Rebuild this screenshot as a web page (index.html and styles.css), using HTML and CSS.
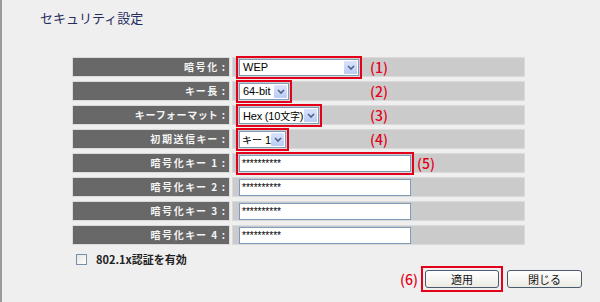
FILE: index.html
```html
<!DOCTYPE html>
<html lang="ja">
<head>
  <meta charset="UTF-8">
  <title>セキュリティ設定</title>
  <link rel="stylesheet" href="styles.css">
</head>
<body>
  <div class="page">
    <h1 class="title">セキュリティ設定</h1>

    <div class="form">
      <div class="label">暗号化<span class="colon">:</span></div>
      <div class="value">
        <span class="slot"><span class="mark"><span class="select w-enc">WEP<span class="arrow"><svg width="8" height="5" viewBox="0 0 8 5"><path d="M1 1l3 3 3-3" fill="none" stroke="#4d6185" stroke-width="1.6"/></svg></span></span></span></span>
        <span class="num">(1)</span>
      </div>

      <div class="label">キー長<span class="colon">:</span></div>
      <div class="value">
        <span class="slot"><span class="mark"><span class="select w-len">64-bit<span class="arrow"><svg width="8" height="5" viewBox="0 0 8 5"><path d="M1 1l3 3 3-3" fill="none" stroke="#4d6185" stroke-width="1.6"/></svg></span></span></span></span>
        <span class="num">(2)</span>
      </div>

      <div class="label">キーフォーマット<span class="colon">:</span></div>
      <div class="value">
        <span class="slot"><span class="mark"><span class="select w-fmt">Hex (10<span class="cjk">文字</span>)<span class="arrow"><svg width="8" height="5" viewBox="0 0 8 5"><path d="M1 1l3 3 3-3" fill="none" stroke="#4d6185" stroke-width="1.6"/></svg></span></span></span></span>
        <span class="num">(3)</span>
      </div>

      <div class="label">初期送信キー<span class="colon">:</span></div>
      <div class="value">
        <span class="slot"><span class="mark"><span class="select w-key"><span class="cjk">キー</span> 1<span class="arrow"><svg width="8" height="5" viewBox="0 0 8 5"><path d="M1 1l3 3 3-3" fill="none" stroke="#4d6185" stroke-width="1.6"/></svg></span></span></span></span>
        <span class="num">(4)</span>
      </div>

      <div class="label">暗号化キー 1<span class="colon">:</span></div>
      <div class="value">
        <span class="mark"><span class="input">**********</span></span>
        <span class="num">(5)</span>
      </div>

      <div class="label">暗号化キー 2<span class="colon">:</span></div>
      <div class="value">
        <span class="plain"><span class="input">**********</span></span>
      </div>

      <div class="label">暗号化キー 3<span class="colon">:</span></div>
      <div class="value">
        <span class="plain"><span class="input">**********</span></span>
      </div>

      <div class="label">暗号化キー 4<span class="colon">:</span></div>
      <div class="value">
        <span class="plain"><span class="input">**********</span></span>
      </div>
    </div>

    <div class="check">
      <span class="checkbox"></span>
      <span>802.1x認証を有効</span>
    </div>

    <div class="buttons">
      <span class="num">(6)</span>
      <span class="mark btn-mark"><span class="btn">適用</span></span>
      <span class="btn close">閉じる</span>
    </div>
  </div>
</body>
</html>
```

FILE: styles.css
```css
body {
  margin: 0;
  background: #efefef;
  font-family: "Noto Sans CJK JP", sans-serif;
}

.page {
  height: 302px;
  box-sizing: border-box;
  border-left: 2px solid #9a9a9a;
}

/* Page heading */
.title {
  margin: 0;
  padding: 10px 0 0 38px;
  font-size: 13px;
  line-height: 16px;
  font-weight: normal;
  color: #262c5e;
}

/* Settings table */
.form {
  display: grid;
  grid-template-columns: 158px 293px;
  grid-auto-rows: 20px;
  column-gap: 2px;
  row-gap: 4px;
  margin: 31px 0 0 70px;
}

.label,
.value {
  box-sizing: border-box;
  border: 1px solid #dadada;
  display: flex;
  align-items: center;
}

.label {
  background: #686868;
  justify-content: flex-end;
  padding-right: 4px;
  color: #f4f4f4;
  font-size: 10px;
  font-weight: bold;
  font-feature-settings: "palt";
  letter-spacing: 1.6px;
  line-height: 12px;
}

.colon {
  margin-left: 3px;
  letter-spacing: 0;
}

.value {
  background: #cbcbcb;
  padding-left: 3px;
}

.slot {
  width: 131px;
  display: flex;
}

/* Red highlight frames */
.mark {
  display: flex;
  border: 2px solid #e2001a;
  padding: 1px;
}

.plain {
  display: flex;
  padding: 3px;
}

.num {
  color: #e2001a;
  font-size: 14px;
  font-weight: 500;
  line-height: 16px;
  margin-left: 3px;
}

/* Fake combo boxes */
.select {
  position: relative;
  box-sizing: border-box;
  height: 17px;
  border: 1px solid #7f9db9;
  background: #fff;
  padding-left: 3px;
  font-family: "Liberation Sans", "Noto Sans CJK JP", sans-serif;
  font-size: 11px;
  line-height: 15px;
  color: #000;
  white-space: nowrap;
}

.cjk {
  font-family: "Noto Sans CJK JP", sans-serif;
  font-size: 10px;
}

.w-enc { width: 120px; }
.w-len { width: 50px; }
.w-fmt { width: 80px; letter-spacing: -0.2px; }
.w-key { width: 47px; padding-left: 2px; }

.arrow {
  position: absolute;
  top: 1px;
  right: 1px;
  bottom: 1px;
  width: 13px;
  background: linear-gradient(#dbe4fc, #b9cbf6);
  border-radius: 1px;
  display: flex;
  align-items: center;
  justify-content: center;
}

.input {
  box-sizing: border-box;
  width: 172px;
  height: 17px;
  border: 1px solid #7f9db9;
  background: #fff;
  padding-left: 2px;
  font-family: "Liberation Sans", sans-serif;
  font-size: 10px;
  line-height: 15px;
  color: #000;
}

/* 802.1x option */
.check {
  display: flex;
  align-items: center;
  gap: 9px;
  margin: 8px 0 0 74px;
  height: 12px;
  font-size: 11px;
  font-weight: bold;
  color: #222;
}

.checkbox {
  box-sizing: border-box;
  width: 11px;
  height: 11px;
  border: 1px solid #7b8ea8;
  background: linear-gradient(135deg, #e6e6e0, #fff);
}

/* Buttons */
.buttons {
  display: flex;
  align-items: center;
  justify-content: flex-end;
  padding-right: 18px;
  margin-top: 1px;
}

.buttons .num {
  margin: 0 3px 0 0;
}

.btn-mark {
  padding: 2px;
}

.btn {
  box-sizing: border-box;
  width: 74px;
  height: 18px;
  border: 1px solid #4a5a70;
  border-radius: 3px;
  background: linear-gradient(#ffffff, #ecebe4);
  font-size: 11px;
  line-height: 16px;
  text-align: center;
  color: #111;
}

.close {
  width: 75px;
  margin-left: 4px;
}
```
